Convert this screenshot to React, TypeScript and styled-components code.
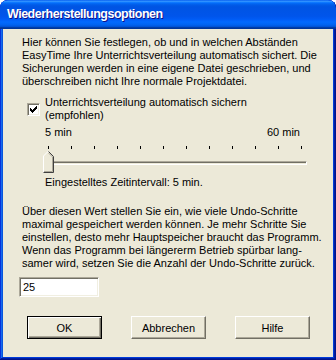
import styled, { createGlobalStyle } from 'styled-components'

const GlobalStyle = createGlobalStyle`
  html, body {
    margin: 0;
    padding: 0;
    background: #ffffff;
  }
`

const Window = styled.div`
  width: 336px;
  height: 360px;
  display: flex;
  flex-direction: column;
  background: #0831d9;
  border-radius: 8px 8px 0 0;
  box-shadow: inset -1px -1px #00138c, inset 1px 1px #0831d9,
    inset -2px -2px #001ea0, inset 2px 2px #166aee, inset -3px -3px #003bda,
    inset 3px 3px #0855dd;
  overflow: hidden;
`

const TitleBar = styled.div`
  height: 29px;
  flex-shrink: 0;
  display: flex;
  align-items: center;
  padding: 0 0 2px 7px;
  box-sizing: border-box;
  border-radius: 8px 8px 0 0;
  background: linear-gradient(
    180deg,
    #0058ee 0%,
    #3593ff 4%,
    #288eff 6%,
    #127dff 8%,
    #036ffc 10%,
    #0262ee 14%,
    #0057e5 20%,
    #0054e3 24%,
    #0055eb 56%,
    #005bf5 66%,
    #026afe 76%,
    #0062ef 86%,
    #0052d6 92%,
    #0040ab 94%,
    #003092 100%
  );
`

const Title = styled.span`
  font-family: 'Liberation Sans', Arial, sans-serif;
  font-weight: bold;
  font-size: 12.5px;
  color: #ffffff;
  text-shadow: 1px 1px #0f1089;
  letter-spacing: -0.5px;
`

const Client = styled.div`
  flex: 1;
  margin: 0 3px 3px 3px;
  background: #ece9d8;
  display: flex;
  flex-direction: column;
  padding: 7px 0 0 16px;
  font-family: 'Liberation Sans', Arial, sans-serif;
  font-size: 11px;
  line-height: 13px;
  color: #000000;
`

const Text = styled.div<{ $indent?: number; $top?: number }>`
  padding-left: ${(p) => p.$indent ?? 3}px;
  margin-top: ${(p) => p.$top ?? 0}px;
  white-space: nowrap;
`

const CheckRow = styled.label`
  display: flex;
  align-items: center;
  gap: 5px;
  margin: 8px 0 0 8px;
`

const CheckBox = styled.span`
  width: 13px;
  height: 13px;
  box-sizing: border-box;
  background: #ffffff;
  border-top: 1px solid #aca899;
  border-left: 1px solid #aca899;
  border-right: 1px solid #ffffff;
  border-bottom: 1px solid #ffffff;
  box-shadow: inset 1px 1px #716f64, inset -1px -1px #f1efe2;
  display: flex;
  align-items: center;
  justify-content: center;
`

const ScaleLabels = styled.div`
  display: flex;
  justify-content: space-between;
  width: 255px;
  margin: 4px 0 0 26px;
`

const Slider = styled.div`
  position: relative;
  width: 265px;
  height: 37px;
  margin-left: 24px;
`

const Ticks = styled.div`
  position: absolute;
  top: 7px;
  left: 5px;
  width: 254px;
  display: flex;
  justify-content: space-between;
`

const Tick = styled.span`
  width: 1px;
  height: 3px;
  background: #000000;
`

const Track = styled.div`
  position: absolute;
  top: 22px;
  left: 1px;
  width: 263px;
  height: 4px;
  box-sizing: border-box;
  border-top: 1px solid #aca899;
  border-left: 1px solid #aca899;
  border-bottom: 1px solid #ffffff;
  border-right: 1px solid #ffffff;
  background: #ece9d8;
  box-shadow: inset 1px 1px #716f64;
`

const Thumb = styled.svg`
  position: absolute;
  top: 12px;
  left: 0;
`

const Field = styled.div`
  margin-top: 7px;
  width: 80px;
  height: 20px;
  box-sizing: border-box;
  background: #ffffff;
  border-top: 1px solid #aca899;
  border-left: 1px solid #aca899;
  border-bottom: 1px solid #ffffff;
  border-right: 1px solid #ffffff;
  box-shadow: inset 1px 1px #716f64, inset -1px -1px #f1efe2;
  padding: 3px 0 0 3px;
`

const ButtonRow = styled.div`
  display: flex;
  gap: 29px;
  margin: 19px 0 0 8px;
`

const Button = styled.button<{ $default?: boolean }>`
  width: 75px;
  height: 23px;
  box-sizing: border-box;
  padding: 0;
  font-family: 'Liberation Sans', Arial, sans-serif;
  font-size: 11px;
  color: #000000;
  background: #ece9d8;
  border: 1px solid;
  border-color: ${(p) =>
    p.$default ? '#000000' : '#ffffff #716f64 #716f64 #ffffff'};
  box-shadow: ${(p) =>
    p.$default
      ? 'inset 1px 1px #ffffff, inset -1px -1px #716f64, inset -2px -2px #aca899'
      : 'inset -1px -1px #aca899'};
`

const App = () => {
  const ticks = Array.from({ length: 12 }, (_, i) => i)
  return (
    <>
      <GlobalStyle />
      <Window>
        <TitleBar>
          <Title>Wiederherstellungsoptionen</Title>
        </TitleBar>
        <Client>
          <Text>
            Hier können Sie festlegen, ob und in welchen Abständen
            <br />
            EasyTime Ihre Unterrichtsverteilung automatisch sichert. Die
            <br />
            Sicherungen werden in eine eigene Datei geschrieben, und
            <br />
            überschreiben nicht Ihre normale Projektdatei.
          </Text>
          <CheckRow>
            <CheckBox>
              <svg width="7" height="7" viewBox="0 0 7 7">
                <path
                  d="M0 2h1v1h1v1h1v-1h1v-1h1v-1h1v-1h1v3h-1v1h-1v1h-1v1h-1v1h-1v-1h-1v-1h-1z"
                  fill="#000000"
                />
              </svg>
            </CheckBox>
            <span>
              Unterrichtsverteilung automatisch sichern
              <br />
              (empfohlen)
            </span>
          </CheckRow>
          <ScaleLabels>
            <span>5 min</span>
            <span>60 min</span>
          </ScaleLabels>
          <Slider>
            <Ticks>
              {ticks.map((i) => (
                <Tick key={i} />
              ))}
            </Ticks>
            <Track />
            <Thumb width="11" height="22" viewBox="0 0 11 22">
              <path d="M5 0h1l5 5v17h-11v-17z" fill="#ece9d8" />
              <path d="M0.5 21.5v-16.5l5 -5" stroke="#ffffff" fill="none" />
              <path d="M5.5 0.5l5 5v16h-10" stroke="#404040" fill="none" />
              <path d="M5.5 2l4 4v14.5h-8.5" stroke="#aca899" fill="none" />
            </Thumb>
          </Slider>
          <Text $indent={26}>Eingestelltes Zeitintervall: 5 min.</Text>
          <Text $top={16}>
            Über diesen Wert stellen Sie ein, wie viele Undo-Schritte
            <br />
            maximal gespeichert werden können. Je mehr Schritte Sie
            <br />
            einstellen, desto mehr Hauptspeicher braucht das Programm.
            <br />
            Wenn das Programm bei längererm Betrieb spürbar lang-
            <br />
            samer wird, setzen Sie die Anzahl der Undo-Schritte zurück.
          </Text>
          <Field>25</Field>
          <ButtonRow>
            <Button $default>OK</Button>
            <Button>Abbrechen</Button>
            <Button>Hilfe</Button>
          </ButtonRow>
        </Client>
      </Window>
    </>
  )
}

export default App
